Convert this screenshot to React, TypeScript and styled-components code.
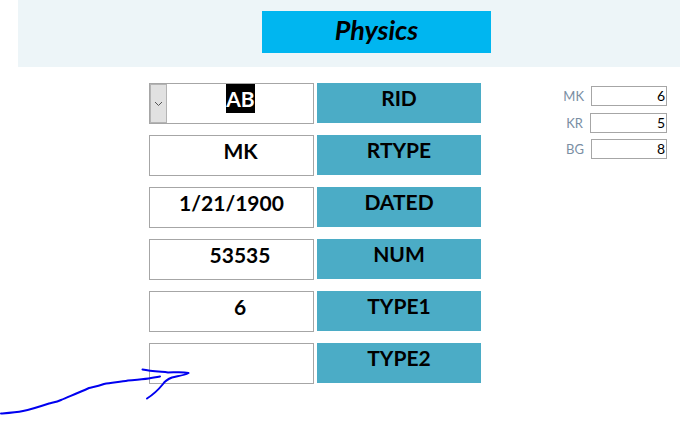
import React from "react";
import styled, { createGlobalStyle } from "styled-components";

const GlobalStyle = createGlobalStyle`
  html, body {
    margin: 0;
    padding: 0;
    background: #fff;
    overflow: hidden;
  }
`;

const Page = styled.div`
  position: relative;
  width: 680px;
  height: 435px;
  font-family: "Lato", "Open Sans", sans-serif;
  color: #000;
`;

const Header = styled.header`
  margin-left: 18px;
  height: 67px;
  padding: 11px 0 0 244px;
  box-sizing: border-box;
  background: #edf5f8;
`;

const Title = styled.h1`
  margin: 0;
  width: 229px;
  height: 42px;
  background: #00b6f0;
  font-size: 27px;
  font-weight: 700;
  font-style: italic;
  line-height: 38px;
  text-align: center;
`;

const Body = styled.div`
  display: flex;
  align-items: flex-start;
  padding: 16px 0 0 149px;
`;

const Form = styled.div`
  display: flex;
  flex-direction: column;
  gap: 11px;
  width: 332px;
`;

const Row = styled.div`
  display: flex;
  gap: 3px;
  height: 41px;
`;

const Field = styled.div`
  display: flex;
  width: 165px;
  height: 41px;
  box-sizing: border-box;
  border: 1px solid #a6a6a6;
  background: #fff;
`;

const DropButton = styled.div`
  display: flex;
  flex: none;
  align-items: center;
  justify-content: center;
  width: 17px;
  box-sizing: border-box;
  border: 1px solid #b4b4b4;
  background: #e1e1e1;
  color: #555;
`;

const Value = styled.div<{ $shift: number }>`
  flex: 1;
  padding-left: ${(p) => p.$shift}px;
  font-size: 21px;
  font-weight: 700;
  line-height: 29px;
  text-align: center;
`;

const Selected = styled.span`
  display: inline-block;
  height: 29px;
  background: #000;
  color: #fff;
  line-height: 29px;
`;

const Label = styled.div`
  width: 164px;
  height: 40px;
  background: #4bacc6;
  font-size: 21px;
  font-weight: 700;
  line-height: 29px;
  text-align: center;
`;

const Side = styled.aside`
  display: grid;
  grid-template-columns: 35px 76px;
  grid-auto-rows: 20px;
  row-gap: 6.5px;
  margin: 3px 0 0 75px;
  align-items: center;
`;

const SideLabel = styled.div<{ $outdent: boolean }>`
  padding-right: ${(p) => (p.$outdent ? 8 : 7)}px;
  color: #7a8ea3;
  font-size: 13px;
  text-align: right;
`;

const SideValue = styled.div<{ $outdent: boolean }>`
  height: 20px;
  box-sizing: border-box;
  margin-left: ${(p) => (p.$outdent ? -1 : 0)}px;
  padding-right: 1px;
  border: 1px solid #a6a6a6;
  background: #fff;
  font-size: 14px;
  line-height: 18px;
  text-align: right;
`;

const Scribble = styled.svg`
  position: absolute;
  top: 340px;
  left: 0;
  pointer-events: none;
`;

const rows = [
  { label: "RID", value: "AB", shift: 1 },
  { label: "RTYPE", value: "MK", shift: 18 },
  { label: "DATED", value: "1/21/1900", shift: 0 },
  { label: "NUM", value: "53535", shift: 17 },
  { label: "TYPE1", value: "6", shift: 17 },
  { label: "TYPE2", value: "", shift: 0 },
];

const sideRows = [
  { label: "MK", value: "6", outdent: false },
  { label: "KR", value: "5", outdent: true },
  { label: "BG", value: "8", outdent: false },
];

export default function App() {
  return (
    <Page>
      <GlobalStyle />
      <Header>
        <Title>Physics</Title>
      </Header>
      <Body>
        <Form>
          {rows.map((row, i) => (
            <Row key={row.label}>
              <Field>
                {i === 0 ? (
                  <>
                    <DropButton>
                      <svg width="9" height="6" viewBox="0 0 9 6">
                        <path d="M1 1l3.5 3.5L8 1" fill="none" stroke="currentColor" />
                      </svg>
                    </DropButton>
                    <Value $shift={row.shift}>
                      <Selected>{row.value}</Selected>
                    </Value>
                  </>
                ) : (
                  <Value $shift={row.shift}>{row.value}</Value>
                )}
              </Field>
              <Label>{row.label}</Label>
            </Row>
          ))}
        </Form>
        <Side>
          {sideRows.map((row) => (
            <React.Fragment key={row.label}>
              <SideLabel $outdent={row.outdent}>{row.label}</SideLabel>
              <SideValue $outdent={row.outdent}>{row.value}</SideValue>
            </React.Fragment>
          ))}
        </Side>
      </Body>
      <Scribble width="200" height="90" viewBox="0 0 200 90" fill="none">
        <path
          d="M1 73.5C8 73 16 72.500 23 71C31 69.500 40 66.500 49 63.500C53 62.500 57 62 61 60C69 56.500 78 53 89 48C93 47 97 46.500 104 44C112 42.500 120 42 128 40.500C136 39.500 144 39.500 151 38C155 37.500 157 37 160 36.500"
          stroke="#0000f0"
          strokeWidth="2"
          strokeLinecap="round"
          strokeLinejoin="round"
        />
        <path
          d="M142.500 29.500C150 31 158 31.500 168 32.500C174 32.500 182 31.500 188.500 33C184 35.500 178 36 172 37.500C168 39 165 41 163 44C159 49 154 54 147 58.500"
          stroke="#0000f0"
          strokeWidth="2"
          strokeLinecap="round"
          strokeLinejoin="round"
        />
      </Scribble>
    </Page>
  );
}
